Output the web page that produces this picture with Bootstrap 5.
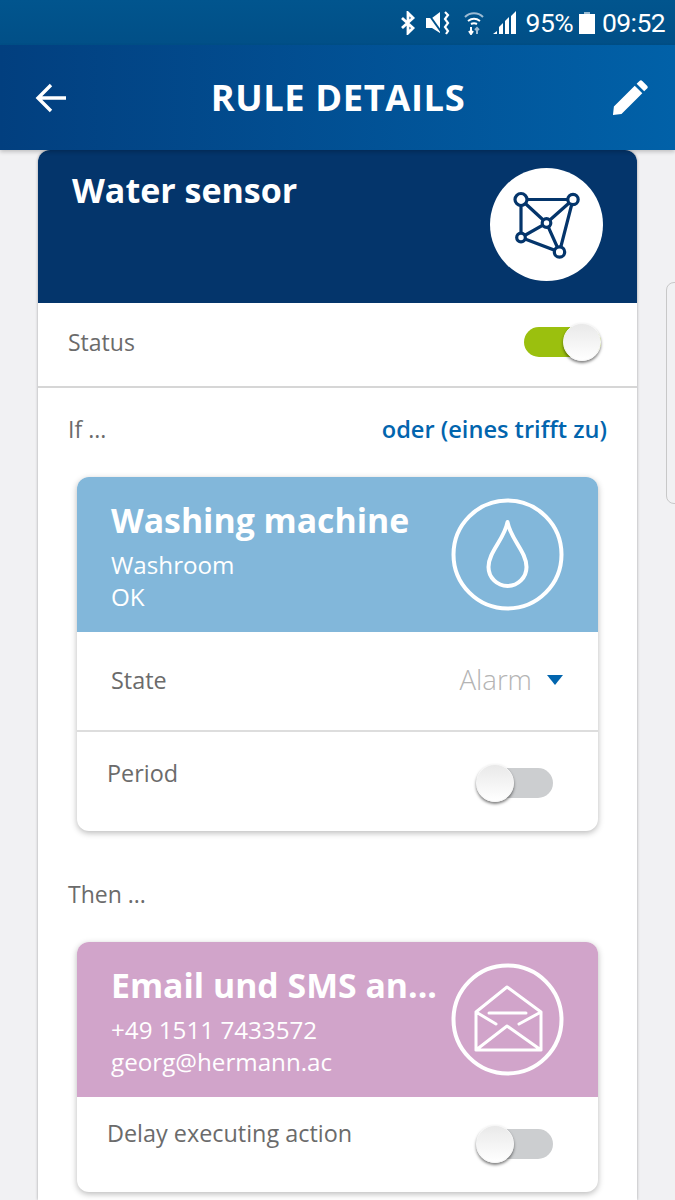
<!DOCTYPE html>
<html lang="en">
<head>
  <meta charset="UTF-8">
  <meta name="viewport" content="width=device-width, initial-scale=1.0">
  <title>Rule details</title>
  <link href="https://cdn.jsdelivr.net/npm/bootstrap@5.3.0/dist/css/bootstrap.min.css" rel="stylesheet">
  <style>
    html, body { height: 1200px; overflow: hidden; }
    body { background: #f1f1f3; font-family: "Open Sans", sans-serif; color: #6b6b6b; position: relative; }
    .status-strip { height: 45px; background: linear-gradient(#01558e, #014f87); color: #fff; font-family: Roboto, sans-serif; font-size: 26.5px; padding-right: 10px; }
    .status-strip span { letter-spacing: -.6px; }
    .gap-bt { margin-right: 10px; }
    .gap-mute { margin-right: 14px; }
    .gap-wifi { margin-right: 9px; }
    .gap-signal { margin-right: 10px; }
    .gap-pct { margin-right: 6px; }
    .gap-batt { margin-right: 7px; }
    .app-strip { height: 105px; background: linear-gradient(90deg, #023f7f, #0161a8); color: #fff; padding: 0 27px 0 34px; position: relative; z-index: 2; box-shadow: 0 2px 4px rgba(0,0,0,.2); }
    .app-strip h1 { font-size: 36.3px; font-weight: 700; margin: 0 4px 0 0; letter-spacing: .6px; }
    .rule-card { margin: 0 38px; background: #fff; border-top-left-radius: 12px; border-top-right-radius: 12px; height: 1050px; box-shadow: 0 0 3px rgba(0,0,0,.35); overflow: hidden; }
    .rule-head { height: 153px; background: #04356b; color: #fff; padding: 20px 34px 0; }
    .rule-head h2 { font-size: 34px; font-weight: 700; margin: 0; line-height: 40px; }
    .icon-disc { width: 113px; height: 113px; border-radius: 50%; background: #fff; margin-top: -2px; }
    .status-row { height: 85px; border-bottom: 2px solid #d6d6d6; padding: 0 36px 4px 30px; font-size: 23px; }
    .status-row .switch-track { margin-bottom: 2px; }
    .section-label { font-size: 23px; padding: 0 30px; line-height: 30px; }
    .if-label { margin-top: 26px; }
    .then-label { margin-top: 48px; }
    .or-link { color: #0265ae; font-weight: 600; font-size: 23.6px; }
    .tile { margin: 33px 39px 0; border-radius: 12px; background: #fff; box-shadow: 0 2px 6px rgba(0,0,0,.28); overflow: hidden; }
    .tile-head { height: 155px; color: #fff; padding: 21px 34px 0; position: relative; }
    .tile-head h3 { font-size: 33.8px; font-weight: 700; margin: 0 0 7px; line-height: 44px; }
    .tile-head p { font-size: 24.2px; margin: 0; line-height: 32px; }
    .tile-blue { background: #82b7da; }
    .tile-pink { background: #d1a4ca; }
    .tile-ring { position: absolute; right: 34px; top: 21px; }
    .tile-row { height: 98px; padding: 0 35px 0 34px; font-size: 23.4px; }
    .tile-row + .tile-row { border-top: 2px solid #ddd; }
    .tile-row-switch { height: 101px; padding: 2px 45px 0 30px; }
    .tile-row-short { height: 95px; padding: 0 45px 2px 30px; }
    .tile-row-switch > span { margin-bottom: 18px; }
    .tile-row-short > span { margin-bottom: 20px; }
    .alarm-value { color: #b4b4b4; font-size: 27.6px; font-weight: 300; line-height: 30px; margin-bottom: 4px; }
    .caret-down { width: 0; height: 0; border-left: 8px solid transparent; border-right: 8px solid transparent; border-top: 10px solid #0265ae; margin-left: 15px; margin-bottom: 2px; }
    .switch-track { width: 77px; height: 30px; border-radius: 15px; position: relative; }
    .switch-knob { position: absolute; top: -4px; width: 38px; height: 38px; border-radius: 50%; background: linear-gradient(#e9e9e9, #fff); border: 1px solid #f6f6f6; box-shadow: 0 2px 3px rgba(0,0,0,.5); }
    .switch-on { background: #9bc00e; }
    .switch-on .switch-knob { right: 0; }
    .switch-off { background: #ccced0; }
    .switch-off .switch-knob { left: 0; }
    .edge-handle { position: absolute; left: 666px; top: 282px; width: 20px; height: 222px; border: 1px solid #c8c8c8; border-radius: 8px; }
  </style>
</head>
<body>

<div class="status-strip d-flex align-items-center justify-content-end">
  <svg class="gap-bt" width="16" height="24" viewBox="0 0 16 24" fill="none" stroke="#fff" stroke-width="2.8"><path d="M2 7l11 10-5 5V2l5 5L2 17"/></svg>
  <svg class="gap-mute" width="24" height="24" viewBox="0 0 24 24"><path d="M0 7h6l8-6v21l-8-5H0z" fill="#fff"/><path d="M1 1l15 21" stroke="#01528b" stroke-width="2"/><path d="M19 1l3 3-3 4 3 4-3 4 3 4-2 3" stroke="#fff" stroke-width="2.2" fill="none"/></svg>
  <svg class="gap-wifi" width="20" height="24" viewBox="0 0 20 24" fill="none" stroke="#fff" stroke-width="2"><path stroke="#9dbbd3" d="M1 6c5-5 13-5 18 0"/><path d="M4 10c4-3 8-3 12 0M7 13c2-1 4-1 6 0"/><path d="M7 16v6M5 20l2 3 2-3"/><path stroke="#9dbbd3" d="M13 23v-6M11 19l2-2 2 2"/></svg>
  <svg class="gap-signal" width="23" height="24" viewBox="0 0 23 24" fill="#fff"><path d="M0 23l4-3v3zM6 23v-7l4-4v11zM12 23V10l4-4v17zM18 23V5l5-5v23z"/></svg>
  <span class="gap-pct">95%</span>
  <svg class="gap-batt" width="16" height="24" viewBox="0 0 16 24" fill="#fff"><path d="M5 1h6v2H5z" opacity=".6"/><path d="M0 3h16v20H0z"/></svg>
  <span>09:52</span>
</div>

<div class="app-strip d-flex align-items-center justify-content-between">
  <svg width="34" height="34" viewBox="0 0 34 34" fill="none" stroke="#fff" stroke-width="3.4"><path d="M32 17H5M17 4L4 17l13 13"/></svg>
  <h1>RULE DETAILS</h1>
  <svg width="36" height="36" viewBox="0 0 38 38" fill="#fff"><path d="M1 37l1-9L24 6l8 8-22 22zM26 4l3-3c1-1 2-1 3 0l5 5c1 1 1 2 0 3l-3 3z"/></svg>
</div>

<div class="rule-card">
  <div class="rule-head d-flex justify-content-between align-items-start">
    <h2>Water sensor</h2>
    <div class="icon-disc d-flex align-items-center justify-content-center">
      <svg width="68" height="68" viewBox="0 0 68 68" fill="#fff" stroke="#04356b" stroke-width="3.2">
        <path d="M8 8.5H60L46.5 61 8 46.5 33.5 32 46.5 61M8 8.5V46.5M8 8.5 33.5 32 60 8.5" fill="none"/>
        <circle cx="8" cy="8.5" r="6"/><circle cx="60" cy="8.5" r="5.2"/><circle cx="33.5" cy="32" r="4.3"/><circle cx="8" cy="46.5" r="4.3"/><circle cx="46.5" cy="61" r="5.2"/>
      </svg>
    </div>
  </div>
  <div class="status-row d-flex align-items-center justify-content-between">
    <span>Status</span>
    <div class="switch-track switch-on"><div class="switch-knob"></div></div>
  </div>
  <div class="section-label if-label d-flex justify-content-between">
    <span>If ...</span><span class="or-link">oder (eines trifft zu)</span>
  </div>
  <div class="tile">
    <div class="tile-head tile-blue">
      <h3>Washing machine</h3>
      <p>Washroom</p>
      <p>OK</p>
      <svg class="tile-ring" width="113" height="113" viewBox="0 0 113 113" fill="none" stroke="#fff" stroke-width="4" stroke-linejoin="round">
        <circle cx="56.5" cy="56.5" r="54"/>
        <path d="M56.5 24c3 17 19 30 19 45a19 19 0 0 1-38 0c0-15 16-28 19-45z"/>
      </svg>
    </div>
    <div class="tile-row d-flex align-items-center justify-content-between">
      <span>State</span>
      <span class="d-flex align-items-center"><span class="alarm-value">Alarm</span><span class="caret-down"></span></span>
    </div>
    <div class="tile-row tile-row-switch d-flex align-items-center justify-content-between">
      <span>Period</span>
      <div class="switch-track switch-off"><div class="switch-knob"></div></div>
    </div>
  </div>
  <div class="section-label then-label">Then ...</div>
  <div class="tile">
    <div class="tile-head tile-pink">
      <h3>Email und SMS an...</h3>
      <p>+49 1511 7433572</p>
      <p>georg@hermann.ac</p>
      <svg class="tile-ring" width="113" height="113" viewBox="0 0 113 113" fill="none" stroke="#fff" stroke-width="3" stroke-linecap="round" stroke-linejoin="round">
        <circle cx="56.5" cy="56.5" r="54" stroke-width="4"/>
        <path d="M25 49 56 24 90 49V87H25zM25 87 56 63 90 87M25 49 45 61M90 49 68 61M38 50H75"/>
      </svg>
    </div>
    <div class="tile-row tile-row-switch tile-row-short d-flex align-items-center justify-content-between">
      <span>Delay executing action</span>
      <div class="switch-track switch-off"><div class="switch-knob"></div></div>
    </div>
  </div>
</div>

<div class="edge-handle"></div>

<script src="https://cdn.jsdelivr.net/npm/bootstrap@5.3.0/dist/js/bootstrap.bundle.min.js"></script>
</body>
</html>
